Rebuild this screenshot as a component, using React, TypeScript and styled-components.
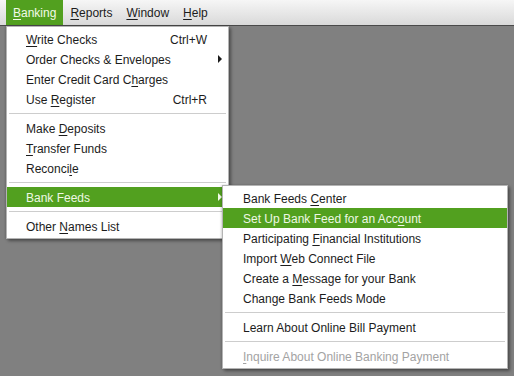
import * as React from 'react'
import styled, { createGlobalStyle } from 'styled-components'

const GlobalStyle = createGlobalStyle`
  html, body {
    margin: 0;
    padding: 0;
    background: #808080;
  }
  body {
    font-family: "Liberation Sans", Arial, sans-serif;
    font-size: 12px;
    color: #1c1c1c;
  }
`

const GREEN = '#52a01f'

const Screen = styled.div`
  position: relative;
  width: 514px;
  height: 376px;
  overflow: hidden;
  background: #808080;
`

const MenuBar = styled.div`
  display: flex;
  height: 25px;
  padding-left: 6px;
  background: linear-gradient(#f6f6f6, #d9d9d9);
  border-bottom: 1px solid #4a4a4a;
`

const BarItem = styled.div<{ $active?: boolean }>`
  display: flex;
  align-items: center;
  padding: 0 7px;
  font-size: 12px;
  background: ${(p) => (p.$active ? GREEN : 'transparent')};
  color: ${(p) => (p.$active ? '#f2fae8' : '#1c1c1c')};
`

const Menu = styled.div<{ $left: number; $top: number; $width: number }>`
  position: absolute;
  left: ${(p) => p.$left}px;
  top: ${(p) => p.$top}px;
  width: ${(p) => p.$width}px;
  box-sizing: border-box;
  display: flex;
  flex-direction: column;
  padding: 2px 0;
  background: #fff;
  border: 1px solid #b4b4b4;
  box-shadow: 2px 2px 3px rgba(0, 0, 0, 0.4), -1px 0 2px rgba(0, 0, 0, 0.15);
`

const Item = styled.div<{ $active?: boolean; $disabled?: boolean; $pad: number }>`
  position: relative;
  display: flex;
  align-items: center;
  height: 20px;
  padding-left: ${(p) => p.$pad}px;
  padding-right: 21px;
  background: ${(p) => (p.$active ? GREEN : 'transparent')};
  color: ${(p) => (p.$active ? '#eef8e4' : p.$disabled ? '#a3a3a3' : '#1c1c1c')};
  white-space: nowrap;
`

const Label = styled.span`
  flex: 1;
  padding-top: 1px;
`

const Shortcut = styled.span`
  color: #1c1c1c;
  padding-top: 1px;
`

const Arrow = styled.span<{ $light?: boolean }>`
  position: absolute;
  right: 6px;
  top: 6px;
  width: 0;
  height: 0;
  border-top: 4px solid transparent;
  border-bottom: 4px solid transparent;
  border-left: 4px solid ${(p) => (p.$light ? '#f2fae8' : '#1c1c1c')};
`

const Separator = styled.div`
  height: 9px;
  display: flex;
  align-items: center;
  padding: 0 2px;
  &::after {
    content: '';
    flex: 1;
    height: 1px;
    background: #cdcdcd;
  }
`

const U = styled.span`
  text-decoration: underline;
  text-underline-offset: 2px;
`

export default function App() {
  return (
    <Screen>
      <GlobalStyle />
      <MenuBar>
        <BarItem $active>
          <U>B</U>anking
        </BarItem>
        <BarItem>
          <U>R</U>eports
        </BarItem>
        <BarItem>
          <U>W</U>indow
        </BarItem>
        <BarItem>
          <U>H</U>elp
        </BarItem>
      </MenuBar>

      <Menu $left={6} $top={26} $width={223}>
        <Item $pad={19}>
          <Label>
            <U>W</U>rite Checks
          </Label>
          <Shortcut>Ctrl+W</Shortcut>
        </Item>
        <Item $pad={19}>
          <Label>Order Checks &amp; Envelopes</Label>
          <Arrow />
        </Item>
        <Item $pad={19}>
          <Label>
            Enter Credit Card C<U>h</U>arges
          </Label>
        </Item>
        <Item $pad={19}>
          <Label>
            Use <U>R</U>egister
          </Label>
          <Shortcut>Ctrl+R</Shortcut>
        </Item>
        <Separator />
        <Item $pad={19}>
          <Label>
            Make <U>D</U>eposits
          </Label>
        </Item>
        <Item $pad={19}>
          <Label>
            <U>T</U>ransfer Funds
          </Label>
        </Item>
        <Item $pad={19}>
          <Label>
            Reconci<U>l</U>e
          </Label>
        </Item>
        <Separator />
        <Item $pad={19} $active>
          <Label>Bank Feeds</Label>
          <Arrow $light />
        </Item>
        <Separator />
        <Item $pad={19}>
          <Label>
            Other <U>N</U>ames List
          </Label>
        </Item>
      </Menu>

      <Menu $left={222} $top={185} $width={286}>
        <Item $pad={20}>
          <Label>
            Bank Feeds <U>C</U>enter
          </Label>
        </Item>
        <Item $pad={20} $active>
          <Label>
            Set Up Bank Feed for an Acc<U>o</U>unt
          </Label>
        </Item>
        <Item $pad={20}>
          <Label>
            Participating <U>F</U>inancial Institutions
          </Label>
        </Item>
        <Item $pad={20}>
          <Label>
            Import <U>W</U>eb Connect File
          </Label>
        </Item>
        <Item $pad={20}>
          <Label>
            Create a <U>M</U>essage for your Bank
          </Label>
        </Item>
        <Item $pad={20}>
          <Label>Change Bank Feeds Mode</Label>
        </Item>
        <Separator />
        <Item $pad={20}>
          <Label>Learn About Online Bill Payment</Label>
        </Item>
        <Separator />
        <Item $pad={20} $disabled>
          <Label>
            <U>I</U>nquire About Online Banking Payment
          </Label>
        </Item>
      </Menu>
    </Screen>
  )
}
